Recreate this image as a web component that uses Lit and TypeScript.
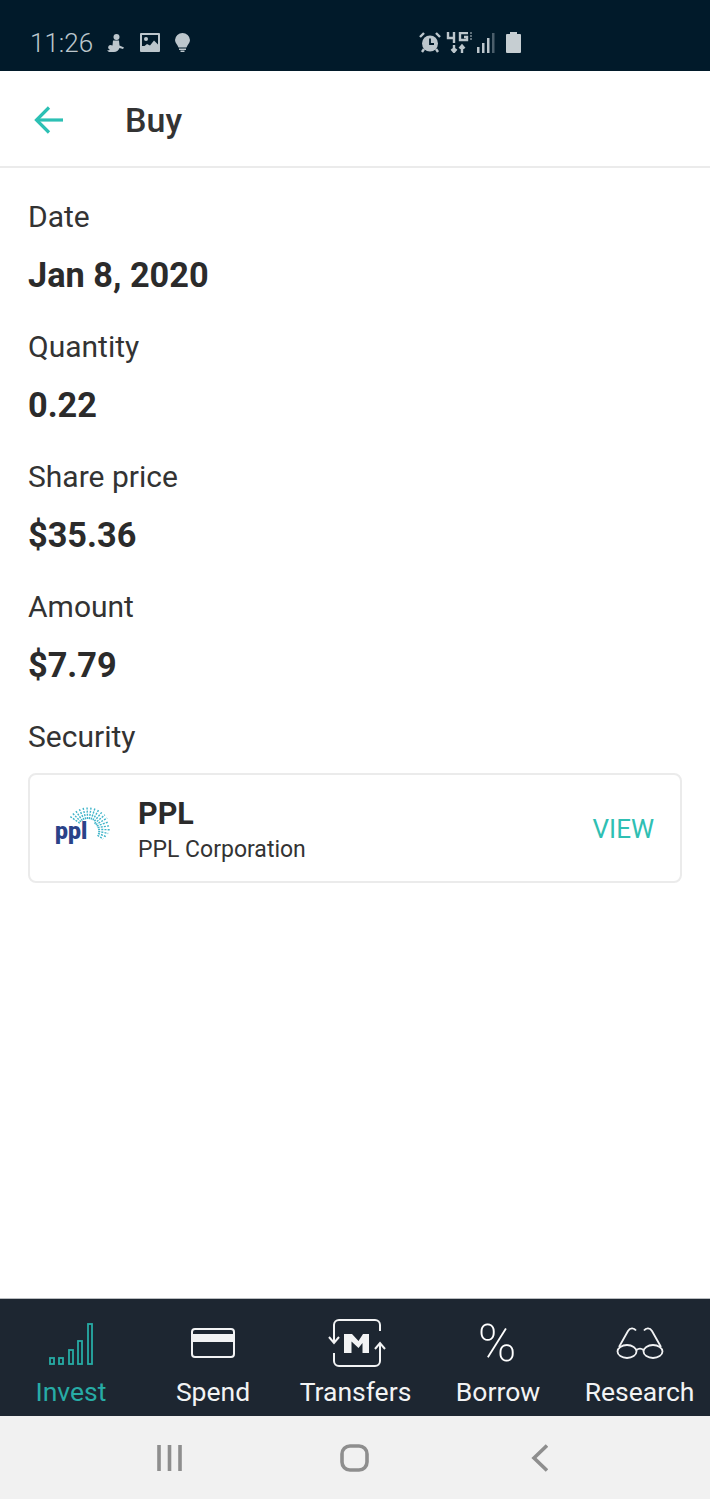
import { LitElement, html, css, svg } from "lit";
import { customElement } from "lit/decorators.js";

const fields = [
  { label: "Date", value: "Jan 8, 2020" },
  { label: "Quantity", value: "0.22" },
  { label: "Share price", value: "$35.36" },
  { label: "Amount", value: "$7.79" },
];

// sun rays of the ppl logo, angles in degrees going clockwise
function rayLines() {
  const lines = [];
  for (let a = -145; a <= 40; a += 10.5) {
    const t = (a * Math.PI) / 180;
    const inner = a > -50 ? 8 + (a + 50) * 0.04 : 10;
    const outer = a > 10 ? 21 - (a - 10) * 0.12 : 22;
    lines.push(svg`<line
      x1=${34 + inner * Math.cos(t)}
      y1=${24 + inner * Math.sin(t)}
      x2=${34 + outer * Math.cos(t)}
      y2=${24 + outer * Math.sin(t)}
    />`);
  }
  return lines;
}

@customElement("app-root")
export class AppRoot extends LitElement {
  static styles = css`
    :host {
      display: block;
      width: 710px;
      height: 1499px;
      background: #fff;
      font-family: Roboto, "Liberation Sans", sans-serif;
      color: #2b2b2b;
    }
    .page {
      display: flex;
      flex-direction: column;
      height: 1499px;
    }
    .status {
      height: 71px;
      flex: none;
      background: #011a2a;
      display: flex;
      align-items: center;
      padding: 14px 0 0 30px;
      box-sizing: border-box;
      color: #bcc6cc;
    }
    .time {
      font-size: 26px;
      font-weight: 300;
      width: 77px;
    }
    .left-icons {
      display: flex;
      align-items: center;
      gap: 15px;
      width: 312px;
    }
    .right-icons {
      display: flex;
      align-items: center;
      gap: 5px;
    }
    .status svg {
      display: block;
    }
    .appbar {
      height: 97px;
      flex: none;
      box-sizing: border-box;
      border-bottom: 2px solid #ebebeb;
      display: flex;
      align-items: center;
      padding: 2px 0 0 34px;
      gap: 61px;
    }
    .appbar svg {
      display: block;
    }
    .title {
      font-size: 34px;
      font-weight: 500;
      color: #333;
    }
    .content {
      flex: 1;
      padding: 33px 28px 0;
    }
    .field {
      height: 130px;
    }
    .label {
      font-size: 30px;
      line-height: 32px;
      color: #333;
    }
    .value {
      font-size: 34.3px;
      line-height: 38px;
      font-weight: 700;
      margin-top: 23px;
      color: #2b2b2b;
    }
    .card {
      margin-top: 20px;
      height: 110px;
      width: 654px;
      box-sizing: border-box;
      border: 2px solid #ebebeb;
      border-radius: 8px;
      display: flex;
      align-items: center;
      padding-left: 24px;
      padding-right: 26px;
    }
    .card svg {
      display: block;
      flex: none;
    }
    .names {
      flex: 1;
      margin-left: 26px;
      padding-top: 5px;
    }
    .ticker {
      font-size: 30.5px;
      line-height: 34px;
      font-weight: 700;
      color: #2b2b2b;
    }
    .name {
      font-size: 23px;
      line-height: 28px;
      margin-top: 5px;
      color: #333;
    }
    .view {
      font-size: 26px;
      color: #2fbfb3;
      padding-top: 2px;
    }
    .tabs {
      height: 118px;
      flex: none;
      background: #1d2631;
      border-top: 1px solid #b9bcc0;
      box-sizing: border-box;
      display: grid;
      grid-template-columns: 142px 142px 143px 142px 141px;
    }
    .tab {
      display: flex;
      flex-direction: column;
      align-items: center;
      color: #f2f3f4;
      font-size: 26.5px;
      line-height: 30px;
    }
    .tab.active {
      color: #27aca6;
    }
    .tab-icon {
      height: 78px;
      padding-top: 19px;
      box-sizing: border-box;
      display: flex;
      align-items: flex-start;
      justify-content: center;
    }
    .tab-icon svg {
      display: block;
      overflow: visible;
    }
    .percent {
      font-size: 52px;
      line-height: 52px;
      font-weight: 200;
      color: #fff;
      margin: 0 2px 0 0;
    }
    .tab span {
      white-space: nowrap;
    }
    .nav {
      height: 83px;
      flex: none;
      background: #f1f1f1;
      display: flex;
      align-items: center;
      padding-left: 156px;
      box-sizing: border-box;
    }
    .nav svg {
      display: block;
    }
  `;

  renderStatus() {
    return html`
      <div class="status">
        <div class="time">11:26</div>
        <div class="left-icons">
          <svg width="18" height="18" viewBox="0 0 18 18" fill="#bcc6cc">
            <circle cx="9.5" cy="3" r="3" />
            <path d="M6 6.5h6l.5 5 4.500 2-1 1.500-3.500-1c-1 2.500-3 4-5.500 4H2l-2-1.500 3-.5c-2-1-2.500-3-1-4.500 1-1 2.500-.5 3.500 0z" />
          </svg>
          <svg width="20" height="19" viewBox="0 0 20 19">
            <rect width="20" height="19" rx="1" fill="#bcc6cc" />
            <rect x="2" y="2" width="16" height="11" fill="#011a2a" />
            <circle cx="6" cy="6" r="2" fill="#bcc6cc" />
            <path d="M2 15l5-4 3 1.500 4-5 4 4v6H2z" fill="#bcc6cc" />
          </svg>
          <svg width="15" height="19" viewBox="0 0 15 19" fill="#bcc6cc">
            <path d="M7.5 0A7.500 7.500 0 0 1 15 7c0 3-2.500 4.500-3.500 7.500h-8C2.500 11.500 0 10 0 7A7.500 7.500 0 0 1 7.500 0z" />
            <rect x="4" y="15.5" width="7" height="1.5" />
            <rect x="5.5" y="17.5" width="4" height="1.5" />
          </svg>
        </div>
        <div class="right-icons">
          <svg width="22" height="21" viewBox="0 0 22 21">
            <circle cx="11" cy="11.5" r="8" fill="#bcc6cc" />
            <path d="M11 6.5v5.500h4" fill="none" stroke="#011a2a" stroke-width="1.8" />
            <path d="M1 5l4-4M21 5l-4-4M5 17l-2 3M17 17l2 3" stroke="#bcc6cc" stroke-width="2.4" />
          </svg>
          <svg width="26" height="21" viewBox="0 0 26 21" fill="none" stroke="#bcc6cc" stroke-width="2.4">
            <path d="M2 0v6h7M8 0v11" />
            <path d="M22 1h-8v7h7V5h-3" />
            <path d="M24 1h2M24 4h2M24 7h2" stroke-width="1.2" />
            <path d="M8 13v7M5.500 17l2.500 3 2.500-3M16 21v-7M13.500 16.500l2.500-3 2.500 3" />
          </svg>
          <svg width="18" height="20" viewBox="0 0 18 20" fill="#bcc6cc">
            <rect x="0" y="14" width="2.5" height="6" />
            <rect x="5" y="10" width="2.5" height="10" />
            <rect x="10" y="5" width="2.5" height="15" />
            <rect x="15" y="0" width="2.5" height="20" opacity="0.4" />
          </svg>
          <svg width="15" height="21" viewBox="0 0 15 21" fill="#c6ced2" style="margin-left:6px">
            <path d="M4 0h7v2h3a1 1 0 0 1 1 1v17a1 1 0 0 1-1 1H1a1 1 0 0 1-1-1V3a1 1 0 0 1 1-1h3z" />
          </svg>
        </div>
      </div>
    `;
  }

  renderTabs() {
    return html`
      <div class="tabs">
        <div class="tab active">
          <div class="tab-icon">
            <svg width="44" height="42" viewBox="0 0 44 42" fill="none" stroke="#27aca6" stroke-width="1.8" style="margin-top:5px">
              <rect x="1" y="35" width="4" height="6" />
              <rect x="10" y="35" width="4" height="6" />
              <rect x="20" y="27" width="4" height="14" />
              <rect x="29" y="18" width="4" height="23" />
              <rect x="39" y="1" width="4" height="40" />
            </svg>
          </div>
          <span>Invest</span>
        </div>
        <div class="tab">
          <div class="tab-icon">
            <svg width="44" height="30" viewBox="0 0 44 30" style="margin-top:10px">
              <rect x="1" y="1" width="42" height="28" rx="3" fill="none" stroke="#f2f3f4" stroke-width="2" />
              <rect x="1" y="6" width="42" height="8" fill="#f2f3f4" />
            </svg>
          </div>
          <span>Spend</span>
        </div>
        <div class="tab">
          <div class="tab-icon">
            <svg width="60" height="50" viewBox="0 0 60 50" fill="none" stroke="#f2f3f4" stroke-width="2">
              <path d="M8 25V7a5 5 0 0 1 5-5h36a5 5 0 0 1 5 5v6" />
              <path d="M8 35v8a5 5 0 0 0 5 5h36a5 5 0 0 0 5-5V26" />
              <path d="M3 19l5 6 5-6" />
              <path d="M49 31l5-6 5 6" />
              <path d="M18 16h8l6.500 7 4.500-7h6v19h-6.500V25l-4 5-7-6.500V35H18z" fill="#f2f3f4" stroke="none" />
            </svg>
          </div>
          <span>Transfers</span>
        </div>
        <div class="tab">
          <div class="tab-icon">
            <div class="percent">%</div>
          </div>
          <span>Borrow</span>
        </div>
        <div class="tab">
          <div class="tab-icon">
            <svg width="48" height="32" viewBox="0 0 48 32" fill="none" stroke="#f2f3f4" stroke-width="1.8" style="margin-top:9px">
              <ellipse cx="11" cy="24.5" rx="9.5" ry="6.5" />
              <ellipse cx="37" cy="24.5" rx="9.5" ry="6.5" />
              <path d="M20.500 23c2-1.500 5-1.500 7 0" />
              <path d="M3 20L12 4c2-3.500 6-3.500 8-.5" />
              <path d="M45 20L36 4c-2-3.500-6-3.500-8-.5" />
            </svg>
          </div>
          <span>Research</span>
        </div>
      </div>
    `;
  }

  render() {
    return html`
      <div class="page">
        ${this.renderStatus()}
        <div class="appbar">
          <svg width="30" height="28" viewBox="0 0 30 28" fill="none" stroke="#2cc0b4" stroke-width="3.2">
            <path d="M29 14H3" />
            <path d="M15 1.5L2.500 14 15 26.500" />
          </svg>
          <div class="title">Buy</div>
        </div>
        <div class="content">
          ${fields.map(
            (f) => html`
              <div class="field">
                <div class="label">${f.label}</div>
                <div class="value">${f.value}</div>
              </div>
            `
          )}
          <div class="label">Security</div>
          <div class="card">
            <svg width="58" height="46" viewBox="0 0 58 46">
              <g stroke="#3fb4c9" stroke-width="1.4" stroke-dasharray="2 1.2" fill="none">
                ${rayLines()}
              </g>
              <text x="1" y="34" font-family="Roboto, sans-serif" font-size="23" font-weight="900" fill="#2a4288">ppl</text>
            </svg>
            <div class="names">
              <div class="ticker">PPL</div>
              <div class="name">PPL Corporation</div>
            </div>
            <div class="view">VIEW</div>
          </div>
        </div>
        ${this.renderTabs()}
        <div class="nav">
          <svg width="28" height="26" viewBox="0 0 28 26" fill="none" stroke="#8e8e8e" stroke-width="3.6">
            <path d="M3 0v26M13.500 0v26M24 0v26" />
          </svg>
          <svg width="30" height="28" viewBox="0 0 30 28" fill="none" stroke="#8e8e8e" stroke-width="3.6" style="margin-left:155px">
            <rect x="3" y="2" width="25" height="24" rx="8" />
          </svg>
          <svg width="20" height="28" viewBox="0 0 20 28" fill="none" stroke="#8e8e8e" stroke-width="3.6" style="margin-left:159px">
            <path d="M19 1.500L6 14l13 12.500" />
          </svg>
        </div>
      </div>
    `;
  }
}
